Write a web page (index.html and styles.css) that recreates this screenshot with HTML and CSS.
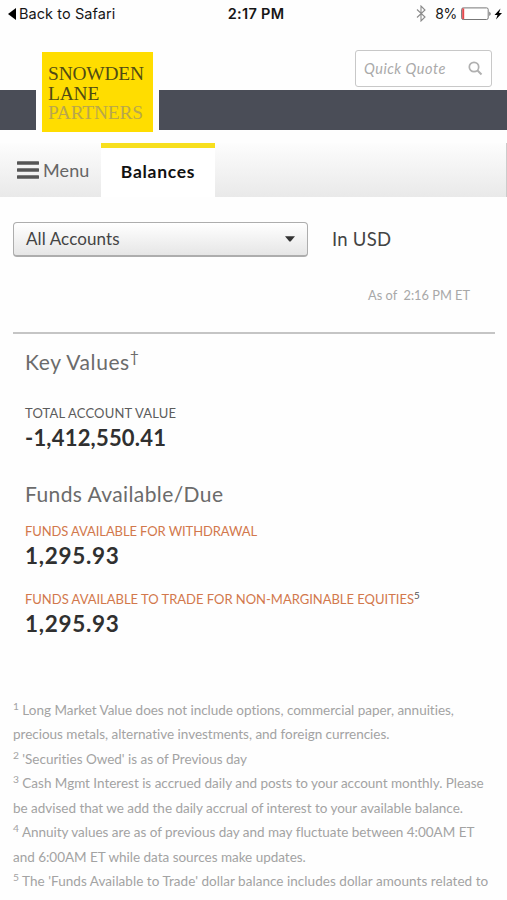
FILE: index.html
```html
<!DOCTYPE html>
<html lang="en">
<head>
<meta charset="utf-8">
<title>Balances</title>
<link rel="stylesheet" href="styles.css">
</head>
<body>
<div class="status">
  <div class="back"><svg width="8" height="12" viewBox="0 0 8 12"><path d="M8 0v12L0 6z"/></svg><span>Back to Safari</span></div>
  <div class="time">2:17 PM</div>
  <div class="power">
    <svg class="bluetooth" width="10" height="17" viewBox="0 0 10 17"><path d="M1 4.5l8 7.5-4 4V1l4 4-8 7.5" fill="none" stroke="#8b8b8b" stroke-width="1.1"/></svg>
    <span>8%</span>
    <svg width="42" height="14" viewBox="0 0 42 14"><rect x=".6" y=".9" width="26.6" height="11.6" rx="1.6" fill="#fff" stroke="#777" stroke-width="1"/><path d="M1.2 1.4h2v10.6h-2z" fill="#e4474c"/><path d="M28.5 4.5q2 2.3 0 4.6z" fill="#333"/><path d="M39.5 1.5L33.5 8h3l-1.5 4.5L41 6h-3z"/></svg>
  </div>
</div>
<header class="header">
  <div class="logo"><span>SNOWDEN</span><span>LANE</span><span class="partners">PARTNERS</span></div>
  <div class="quote"><span>Quick Quote</span><svg width="15" height="15" viewBox="0 0 15 15" fill="none" stroke="#b0b0b0"><circle cx="6" cy="6" r="4.7" stroke-width="1.7"/><path d="M9.5 9.5l4 4" stroke-width="2"/></svg></div>
</header>
<nav class="nav">
  <div class="menu"><svg width="22" height="18" viewBox="0 0 22 18"><path d="M1 2h20M1 9h20M1 16h20" stroke="#555" stroke-width="3.3" stroke-linecap="round"/></svg><span>Menu</span></div>
  <div class="tab"><span>Balances</span></div>
</nav>
<main>
  <div class="filters">
    <div class="select"><span>All Accounts</span><svg width="10" height="6" viewBox="0 0 10 6"><path d="M0 .3h10L5.6 5.6H4.4z" fill="#333"/></svg></div>
    <span class="currency">In USD</span>
  </div>
  <div class="asof"><span>As of&nbsp; 2:16 PM ET</span></div>
  <section class="values">
    <h2 class="key">Key Values<sup>†</sup></h2>
    <div class="label total">TOTAL ACCOUNT VALUE</div>
    <div class="amount negative">-1,412,550.41</div>
    <h2 class="funds">Funds Available/Due</h2>
    <div class="label link">FUNDS AVAILABLE FOR WITHDRAWAL</div>
    <div class="amount">1,295.93</div>
    <div class="label link trade">FUNDS AVAILABLE TO TRADE FOR NON-MARGINABLE EQUITIES<sup>5</sup></div>
    <div class="amount">1,295.93</div>
  </section>
  <footer class="notes">
    <p><sup>1</sup> Long Market Value does not include options, commercial paper, annuities,<br>precious metals, alternative investments, and foreign currencies.</p>
    <p><sup>2</sup> 'Securities Owed' is as of Previous day</p>
    <p><sup>3</sup> Cash Mgmt Interest is accrued daily and posts to your account monthly. Please<br>be advised that we add the daily accrual of interest to your available balance.</p>
    <p><sup>4</sup> Annuity values are as of previous day and may fluctuate between 4:00AM ET<br>and 6:00AM ET while data sources make updates.</p>
    <p class="last"><sup>5</sup> The 'Funds Available to Trade' dollar balance includes dollar amounts related to</p>
  </footer>
</main>
</body>
</html>
```
FILE: styles.css
```css
* { box-sizing: border-box; }
body { margin: 0; width: 507px; height: 900px; overflow: hidden; background: #fefefe; font-family: Lato, "Liberation Sans", sans-serif; white-space: nowrap; font-variant-ligatures: none; }
svg { display: block; flex: none; }
h2, p { margin: 0; font-weight: 400; }
.status { display: grid; grid-template-columns: 1fr auto 1fr; height: 27px; padding: 0 4px 0 8px; align-items: center; font: 14.5px/27px Inter, sans-serif; color: #161616; }
.back { display: flex; align-items: center; gap: 3px; letter-spacing: .07px; }
.time { font-weight: 600; letter-spacing: .3px; padding-left: 1px; }
.power { display: flex; justify-content: flex-end; align-items: center; font-size: 14px; letter-spacing: -.3px; }
.bluetooth { margin-right: 9px; }
.power span { margin-right: 4px; }
.header { display: flex; justify-content: space-between; align-items: flex-start; height: 116px; padding: 23px 15px 0 36px; background: linear-gradient(#4a4d57, #4a4d57) 0 63px / 100% 40px no-repeat; }
.logo { width: 123px; height: 82px; margin-top: 1px; border: 6px solid #fefefe; border-width: 1px 6px 1px; background: #ffdd00; padding: 12px 0 0 6px; font: 19.4px/19.5px "Liberation Serif", serif; color: #504b14; display: flex; flex-direction: column; letter-spacing: -.15px; }
.partners { color: #b9a74c; }
.quote { display: flex; justify-content: space-between; align-items: center; width: 137px; height: 37px; border: 1px solid #c8c8c8; border-radius: 3px; background: #fff; padding: 0 8px 0 8px; font-size: 14.5px; font-style: italic; color: #aaa; letter-spacing: .5px; }
.nav { display: flex; height: 54px; background: linear-gradient(#fdfdfd, #e9e9e9); border-right: 1px solid #ccc; }
.menu { width: 101px; padding-left: 17px; display: flex; align-items: center; gap: 4px; font-size: 18px; color: #666; letter-spacing: .1px; }
.tab { width: 114px; border-top: 5px solid #f7df1e; background: #fff; text-align: center; font-weight: 700; font-size: 17.5px; line-height: 47px; letter-spacing: .7px; color: #111; }
.filters { display: flex; align-items: center; padding: 25px 0 0 13px; gap: 24px; }
.select { width: 295px; height: 35px; border: 1px solid #adadad; border-width: 1px 1px 2px; border-radius: 4px; background: linear-gradient(#fff, #e6e6e6); display: flex; align-items: center; justify-content: space-between; padding: 0 12px 1px; font-size: 17px; color: #444; letter-spacing: .1px; }
.currency { font-size: 18.5px; line-height: 33px; color: #444; letter-spacing: .25px; }
.asof { margin: 0 12px 0 13px; height: 77px; border-bottom: 2px solid #c5c5c5; padding: 28px 25px 0 0; text-align: right; font-size: 12.8px; line-height: 20px; color: #a8a8a8; }
.values { padding: 14px 0 0 25px; }
h2 { font-size: 21px; line-height: 28px; color: #6b6b6b; letter-spacing: .4px; }
.key { letter-spacing: .6px; }
sup { line-height: 0; font-size: 76%; vertical-align: baseline; position: relative; top: -.5em; }
.label { font-size: 13px; line-height: 18px; color: #5c5c5c; }
.total { margin-top: 28px; letter-spacing: .17px; }
.amount { font-size: 22.5px; font-weight: 700; line-height: 32px; color: #303030; letter-spacing: .7px; }
.negative { font-size: 22px; letter-spacing: .2px; }
.funds { margin-top: 26px; }
.link { color: #d2784c; margin-top: 14px; letter-spacing: -.1px; }
.trade { margin-top: 18px; letter-spacing: -.02px; }
.link sup { color: #555; }
.notes { padding: 58px 0 0 13px; font-size: 13.5px; line-height: 24.45px; color: #a3a3a3; letter-spacing: -.02px; }
.last { letter-spacing: .04px; }
```
